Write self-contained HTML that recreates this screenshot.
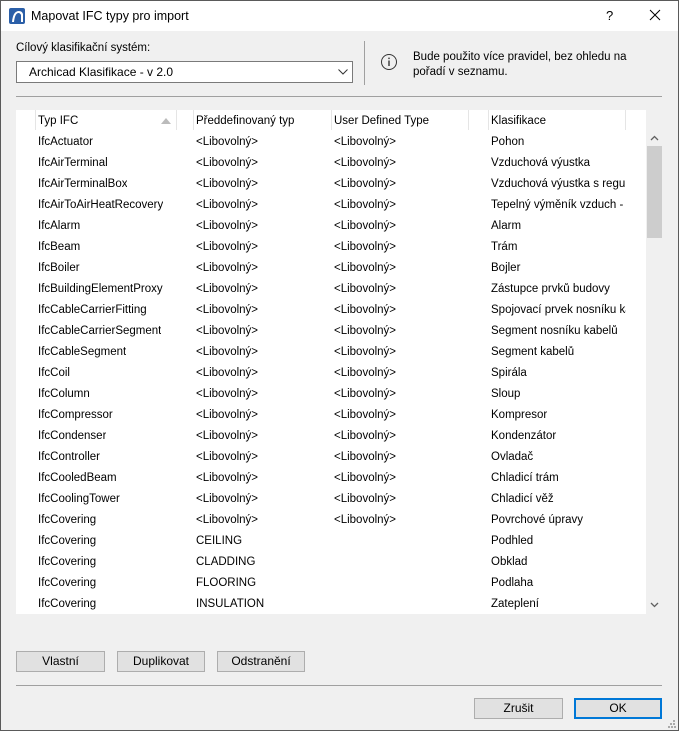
<!DOCTYPE html>
<html><head><meta charset="utf-8"><style>
*{box-sizing:border-box;margin:0;padding:0}
body{width:679px;height:731px;background:#f0f0f0;font-family:"Liberation Sans",sans-serif;font-size:11.5px;color:#000;position:relative;overflow:hidden}
.frame{position:absolute;left:0;top:0;width:679px;height:731px;border:1px solid #5a5a5a;pointer-events:none}
.title{position:absolute;left:1px;top:1px;width:677px;height:30px;background:#fff}
.abs{position:absolute;white-space:nowrap}
.tbl{position:absolute;left:16px;top:110px;width:630px;height:504px;background:#fff;overflow:hidden}
.hdr{position:absolute;top:0;height:20px;left:0;width:630px}
.sep{position:absolute;top:0;width:1px;height:20px;background:#e5e5e5}
.row{position:absolute;left:0;height:21px;width:630px}
.row span{position:absolute;top:5px;white-space:nowrap;overflow:hidden}
.btn{position:absolute;height:21px;background:#e1e1e1;border:1px solid #adadad;text-align:center;line-height:19px;font-size:12px}
.hl{position:absolute;height:1px;background:#a0a0a0}
</style></head><body>
<div class="title"></div>
<svg class="abs" style="left:9px;top:8px" width="16" height="16" viewBox="0 0 16 16"><rect width="16" height="16" rx="2" fill="#2b5fa8"/><path d="M3 14 Q4 3 10 3 Q13 3 14 6 L14 14 L12 14 L12 7 Q11 5 9.5 5 Q6 5 5 14Z" fill="#fff"/></svg>
<div class="abs" style="left:31px;top:9px;font-size:12.5px">Mapovat IFC typy pro import</div>
<div class="abs" style="left:606px;top:8px;font-size:13px">?</div>
<svg class="abs" style="left:649px;top:9px" width="12" height="12"><path d="M1 1L11 11M11 1L1 11" stroke="#000" stroke-width="1"/></svg>
<div class="abs" style="left:16px;top:42px">Cílový klasifikační systém:</div>
<div class="abs" style="left:16px;top:61px;width:337px;height:22px;background:#fff;border:1px solid #7a7a7a"></div>
<div class="abs" style="left:29px;top:65px;font-size:12px">Archicad Klasifikace - v 2.0</div>
<svg class="abs" style="left:338px;top:69px" width="10" height="6"><path d="M0.5 0.5L5 5L9.5 0.5" stroke="#333" fill="none"/></svg>
<div class="abs" style="left:364px;top:41px;width:1px;height:44px;background:#a0a0a0"></div>
<svg class="abs" style="left:380px;top:53px" width="18" height="18"><circle cx="9" cy="9" r="7.5" stroke="#333" fill="none"/><rect x="8.3" y="7.5" width="1.4" height="5.5" fill="#333"/><rect x="8.3" y="4.6" width="1.4" height="1.5" fill="#333"/></svg>
<div class="abs" style="left:413px;top:50px;line-height:15px">Bude použito více pravidel, bez ohledu na<br>pořadí v seznamu.</div>
<div class="hl" style="left:16px;top:96px;width:646px"></div>
<div class="tbl">
<div class="hdr">
<div class="sep" style="left:19px"></div>
<span class="abs" style="left:22px;top:5px">Typ IFC</span>
<svg class="abs" style="left:145px;top:8px" width="10" height="6"><path d="M0 6L5 0L10 6Z" fill="#bbb"/></svg>
<div class="sep" style="left:160px"></div>
<div class="sep" style="left:177px"></div>
<span class="abs" style="left:180px;top:5px">Předdefinovaný typ</span>
<div class="sep" style="left:315px"></div>
<span class="abs" style="left:318px;top:5px">User Defined Type</span>
<div class="sep" style="left:452px"></div>
<div class="sep" style="left:472px"></div>
<span class="abs" style="left:475px;top:5px">Klasifikace</span>
<div class="sep" style="left:609px"></div>
</div>
<div id="rows"></div>
</div>
<div class="abs" style="left:646px;top:130px;width:16px;height:484px;background:#f0f0f0"></div>
<div class="abs" style="left:647px;top:146px;width:15px;height:92px;background:#cdcdcd"></div>
<svg class="abs" style="left:650px;top:135px" width="9" height="6"><path d="M1 5L4.5 1.5L8 5" stroke="#606060" fill="none" stroke-width="1.3"/></svg>
<svg class="abs" style="left:650px;top:602px" width="9" height="6"><path d="M1 1L4.5 4.5L8 1" stroke="#606060" fill="none" stroke-width="1.3"/></svg>
<div class="btn" style="left:16px;top:651px;width:89px">Vlastní</div>
<div class="btn" style="left:117px;top:651px;width:88px">Duplikovat</div>
<div class="btn" style="left:217px;top:651px;width:88px">Odstranění</div>
<div class="hl" style="left:16px;top:685px;width:646px"></div>
<div class="btn" style="left:474px;top:698px;width:89px">Zrušit</div>
<div class="btn" style="left:574px;top:698px;width:88px;border:2px solid #0078d7;line-height:17px">OK</div>
<svg class="abs" style="left:668px;top:720px" width="8" height="8" fill="#aaa"><rect x="5" y="0" width="2" height="2"/><rect x="2" y="3" width="2" height="2"/><rect x="5" y="3" width="2" height="2"/><rect x="0" y="6" width="2" height="2"/><rect x="3" y="6" width="2" height="2"/><rect x="6" y="6" width="2" height="2"/></svg>
<div class="frame"></div>
<script>
var d=[["IfcActuator","<Libovolný>","<Libovolný>","Pohon"],["IfcAirTerminal","<Libovolný>","<Libovolný>","Vzduchová výustka"],["IfcAirTerminalBox","<Libovolný>","<Libovolný>","Vzduchová výustka s regulací"],["IfcAirToAirHeatRecovery","<Libovolný>","<Libovolný>","Tepelný výměník vzduch - vzduch"],["IfcAlarm","<Libovolný>","<Libovolný>","Alarm"],["IfcBeam","<Libovolný>","<Libovolný>","Trám"],["IfcBoiler","<Libovolný>","<Libovolný>","Bojler"],["IfcBuildingElementProxy","<Libovolný>","<Libovolný>","Zástupce prvků budovy"],["IfcCableCarrierFitting","<Libovolný>","<Libovolný>","Spojovací prvek nosníku kabelů"],["IfcCableCarrierSegment","<Libovolný>","<Libovolný>","Segment nosníku kabelů"],["IfcCableSegment","<Libovolný>","<Libovolný>","Segment kabelů"],["IfcCoil","<Libovolný>","<Libovolný>","Spirála"],["IfcColumn","<Libovolný>","<Libovolný>","Sloup"],["IfcCompressor","<Libovolný>","<Libovolný>","Kompresor"],["IfcCondenser","<Libovolný>","<Libovolný>","Kondenzátor"],["IfcController","<Libovolný>","<Libovolný>","Ovladač"],["IfcCooledBeam","<Libovolný>","<Libovolný>","Chladicí trám"],["IfcCoolingTower","<Libovolný>","<Libovolný>","Chladicí věž"],["IfcCovering","<Libovolný>","<Libovolný>","Povrchové úpravy"],["IfcCovering","CEILING","","Podhled"],["IfcCovering","CLADDING","","Obklad"],["IfcCovering","FLOORING","","Podlaha"],["IfcCovering","INSULATION","","Zateplení"]];
var h="";d.forEach(function(r,i){function e(s){return s.replace(/</g,"&lt;").replace(/>/g,"&gt;")}
h+='<div class="row" style="top:'+(21+i*21)+'px"><span style="left:22px">'+e(r[0])+'</span><span style="left:180px">'+e(r[1])+'</span><span style="left:318px">'+e(r[2])+'</span><span style="left:475px;width:135px">'+e(r[3])+'</span></div>';});
document.getElementById("rows").innerHTML=h;
</script>
</body></html>
